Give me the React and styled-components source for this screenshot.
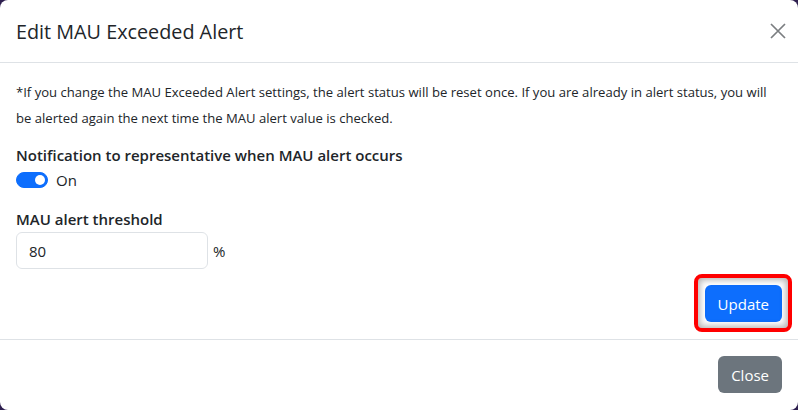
import React, { useState } from 'react';
import styled, { createGlobalStyle } from 'styled-components';

const GlobalStyle = createGlobalStyle`
  html, body {
    margin: 0;
    padding: 0;
    background: #2e1f4f;
  }
  body {
    font-family: "Open Sans", "Noto Sans", sans-serif;
    color: #212529;
  }
`;

const Modal = styled.div`
  width: 798px;
  height: 410px;
  box-sizing: border-box;
  background: #fff;
  border-radius: 8px;
  display: flex;
  flex-direction: column;
  overflow: hidden;
`;

const Header = styled.div`
  height: 63px;
  box-sizing: border-box;
  padding: 0 16px;
  display: flex;
  align-items: center;
  justify-content: space-between;
  border-bottom: 1px solid #dee2e6;
`;

const Title = styled.h5`
  margin: 0;
  font-size: 19.8px;
  font-weight: 500;
  color: #212529;
`;

const CloseX = styled.button`
  width: 24px;
  height: 24px;
  padding: 0;
  border: 0;
  background: none;
  display: flex;
  align-items: center;
  justify-content: center;
  margin-right: -8px;
  cursor: pointer;
`;

const Body = styled.div`
  padding: 16px 16px 17px;
  display: flex;
  flex-direction: column;
  border-bottom: 1px solid #dee2e6;
`;

const Note = styled.p`
  margin: 0 0 13px;
  font-size: 13.1px;
  line-height: 26px;
  color: #212529;
`;

const Label = styled.div`
  font-size: 15px;
  font-weight: 600;
  line-height: 22px;
  color: #212529;
`;

const SwitchRow = styled.label`
  display: flex;
  align-items: center;
  gap: 8px;
  height: 27px;
  margin-bottom: 15px;
  font-size: 15px;
  cursor: pointer;
`;

const Track = styled.span`
  width: 32px;
  height: 16px;
  border-radius: 8px;
  background: ${(p) => (p.$on ? '#0d6efd' : '#fff')};
  border: 1px solid ${(p) => (p.$on ? '#0d6efd' : '#c4c8cc')};
  box-sizing: border-box;
  display: flex;
  align-items: center;
  justify-content: ${(p) => (p.$on ? 'flex-end' : 'flex-start')};
  padding: 0 2px;
`;

const Knob = styled.span`
  width: 10px;
  height: 10px;
  border-radius: 50%;
  background: ${(p) => (p.$on ? '#fff' : '#c4c8cc')};
`;

const InputRow = styled.div`
  display: flex;
  align-items: center;
  gap: 5px;
  margin-top: 2px;
  font-size: 15px;
`;

const Input = styled.input`
  width: 192px;
  height: 37px;
  box-sizing: border-box;
  border: 1px solid #dee2e6;
  border-radius: 6px;
  padding: 0 12px;
  font-family: inherit;
  font-size: 15px;
  color: #212529;
  outline: none;
`;

const Actions = styled.div`
  display: flex;
  justify-content: flex-end;
  margin-top: 16px;
`;

const Highlight = styled.div`
  position: relative;
  display: flex;
  &::after {
    content: '';
    position: absolute;
    left: -11px;
    top: -11px;
    right: -10px;
    bottom: -10px;
    border: 4px solid #ff0000;
    border-radius: 8px;
    box-shadow: inset 0 0 6px 2px rgba(0, 0, 0, 0.3);
    pointer-events: none;
  }
`;

const Button = styled.button`
  height: 37px;
  padding: 0 13px;
  border: 0;
  border-radius: 6px;
  font-family: inherit;
  font-size: 15px;
  color: #fff;
  background: ${(p) => (p.$variant === 'secondary' ? '#6c757d' : '#0d6efd')};
  cursor: pointer;
`;

const Footer = styled.div`
  flex: 1;
  padding: 16px;
  display: flex;
  justify-content: flex-end;
  align-items: flex-start;
`;

export default function App() {
  const [on, setOn] = useState(true);
  const [value, setValue] = useState('80');

  return (
    <>
      <GlobalStyle />
      <Modal>
        <Header>
          <Title>Edit MAU Exceeded Alert</Title>
          <CloseX aria-label="Close">
            <svg width="16" height="16" viewBox="0 0 16 16">
              <path d="M1 1 L15 15 M15 1 L1 15" stroke="#7b7e81" strokeWidth="1.7" fill="none" />
            </svg>
          </CloseX>
        </Header>
        <Body>
          <Note>
            *If you change the MAU Exceeded Alert settings, the alert status will be reset once. If you are already in alert status, you will be alerted again the next time the MAU alert value is checked.
          </Note>
          <Label>Notification to representative when MAU alert occurs</Label>
          <SwitchRow onClick={() => setOn(!on)}>
            <Track $on={on}>
              <Knob $on={on} />
            </Track>
            {on ? 'On' : 'Off'}
          </SwitchRow>
          <Label>MAU alert threshold</Label>
          <InputRow>
            <Input value={value} onChange={(e) => setValue(e.target.value)} />
            %
          </InputRow>
          <Actions>
            <Highlight>
              <Button>Update</Button>
            </Highlight>
          </Actions>
        </Body>
        <Footer>
          <Button $variant="secondary">Close</Button>
        </Footer>
      </Modal>
    </>
  );
}
